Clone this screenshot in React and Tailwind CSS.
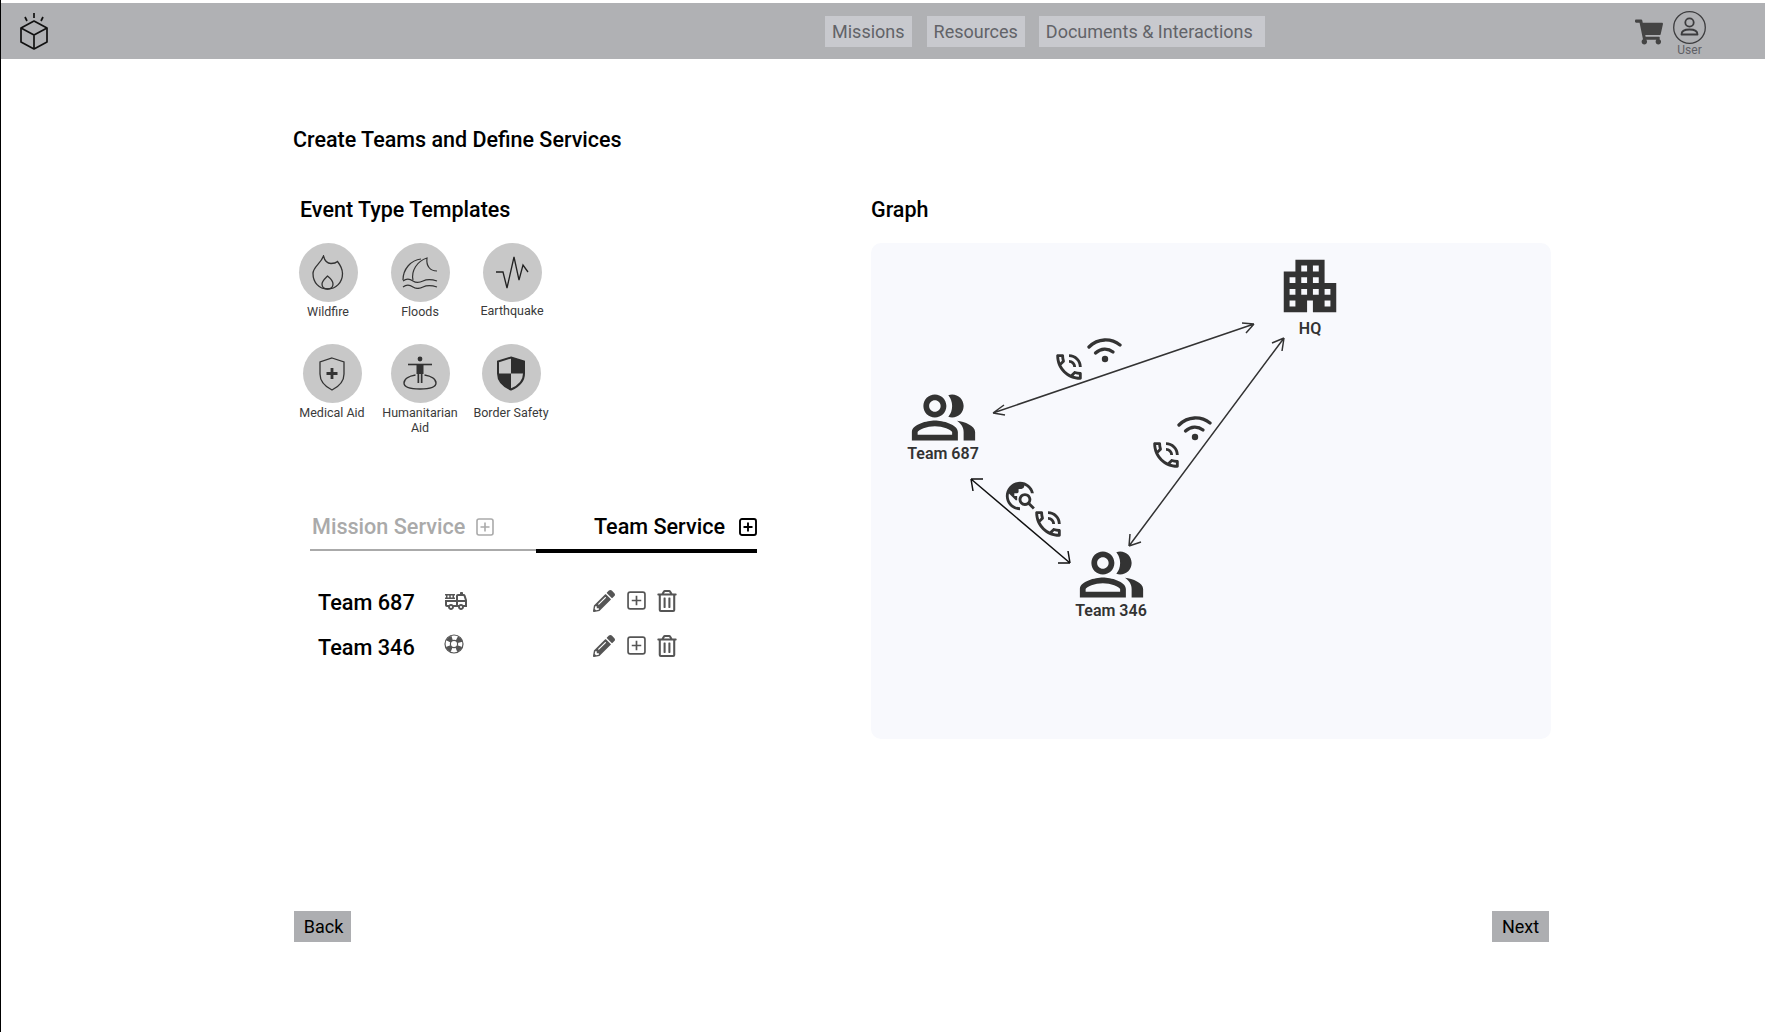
import { FaShoppingCart, FaPencilAlt, FaRegTrashAlt } from 'react-icons/fa';
import { MdApartment, MdOutlinePeopleAlt, MdOutlinePhoneInTalk, MdTravelExplore, MdOutlineFireTruck } from 'react-icons/md';

const font = { fontFamily: 'Roboto, sans-serif' };

const Logo = () => (
  <svg width="30" height="38" viewBox="0 0 30 38" fill="none" stroke="#111" strokeWidth="1.7" strokeLinejoin="round">
    <path d="M15 8 L28 15 L28 29 L15 36 L2 29 L2 15 Z" />
    <path d="M2 15 L15 22 L28 15 M15 22 V36" />
    <path d="M15 0 V5 M6 4 L8 8 M24 4 L22 8" />
  </svg>
);

const UserIcon = () => (
  <svg width="33" height="33" viewBox="0 0 33 33" fill="none" stroke="#3c3c3e" strokeWidth="1.3">
    <circle cx="16.5" cy="16.5" r="15.8" />
    <circle cx="16.5" cy="11.5" r="4.2" strokeWidth="1.8" />
    <path d="M8.5 23.5 C8.5 19.5 12 18.5 16.5 18.5 S24.5 19.5 24.5 23.5 Z" strokeWidth="1.8" strokeLinejoin="round" />
  </svg>
);

const Wildfire = () => (
  <svg width="32" height="35" viewBox="0 0 32 35" fill="none" stroke="#333" strokeWidth="1.3">
    <path d="M11.5 1 C12.5 5 15 8.5 19 8.5 C22 8.5 25 7 25.5 6.5 C29 11 30.5 15 30.5 18.5 C30.5 27.5 24 34 15.5 34 C7 34 1 27.5 1 18.5 C1 12 8.5 9 11.5 1 Z" />
    <path d="M15.5 21 C18 23 21 26 21 29 C21 32 19 34 15.5 34 C12 34 10 32 10 29 C10 26 13 23.5 15.5 21 Z" />
  </svg>
);

const Floods = () => (
  <svg width="36" height="32" viewBox="0 0 36 32" fill="none" stroke="#333" strokeWidth="1.2">
    <path d="M1 23 C1 12 9 3 19 2" />
    <path d="M11 23 C9 14 15 4 25 1 C24 9 28 14 35 14" />
    <path d="M1 24 C5 21 8 22 11 24 S17 26 21 24 S29 22 35 24" />
    <path d="M1 30 C5 27 8 28 11 30 S17 32 21 30 S29 28 35 30" />
  </svg>
);

const Earthquake = () => (
  <svg width="34" height="33" viewBox="0 0 34 33" fill="none" stroke="#222" strokeWidth="1.3">
    <path d="M1 16 H8 L12 32 L19 1 L24 24 L28 9 L33 16" />
  </svg>
);

const Medical = () => (
  <svg width="28" height="34" viewBox="0 0 28 34" fill="none" stroke="#333" strokeWidth="1.3">
    <path d="M14 1 L26 5 V17 C26 25 20 30 14 33 C8 30 2 25 2 17 V5 Z" />
    <path d="M14 11 V22 M8.5 16.5 H19.5" strokeWidth="2.8" />
  </svg>
);

const Humanitarian = () => (
  <svg width="34" height="35" viewBox="0 0 34 35" fill="none" stroke="#333">
    <circle cx="17" cy="3" r="2.4" fill="#333" stroke="none" />
    <path d="M5 8.5 H29" strokeWidth="1.6" />
    <path d="M13.5 8 H20.5 V18 H19.5 V27 H17.8 V18 H16.2 V27 H14.5 V18 H13.5 Z" fill="#333" stroke="none" />
    <path d="M12.5 19 C6 20 1 23 1 27 C1 31 8 33 17 33 S33 31 33 27 C33 23 28 20 21.5 19" strokeWidth="1.4" />
  </svg>
);

const Border = () => (
  <svg width="28" height="35" viewBox="0 0 28 35">
    <path d="M14 1.5 L27 5.5 V17.5 C27 25.5 21 30.5 14 33.5 C7 30.5 1 25.5 1 17.5 V5.5 Z" fill="none" stroke="#2e2e2e" strokeWidth="2" />
    <path d="M14 1.5 L27 5.5 V17.5 H14 Z M14 17.5 V33.5 C7 30.5 1 25.5 1 17.5 Z" fill="#2e2e2e" />
  </svg>
);

const PlusBox = ({ size = 18, color = '#555', width = 1.6 }) => (
  <svg width={size} height={size} viewBox="0 0 18 18" fill="none" stroke={color} strokeWidth={width}>
    <rect x="1" y="1" width="16" height="16" rx="2" />
    <path d="M9 4.5 V13.5 M4.5 9 H13.5" />
  </svg>
);

const LifeRing = () => (
  <svg width="20" height="20" viewBox="0 0 20 20" fill="none" stroke="#555">
    <circle cx="10" cy="10" r="9" strokeWidth="1.2" />
    <circle cx="10" cy="10" r="3.6" strokeWidth="1.2" />
    <circle cx="10" cy="10" r="6.25" strokeWidth="5" strokeDasharray="5 4.82" transform="rotate(20.5 10 10)" />
  </svg>
);

const Wifi = () => (
  <svg width="35" height="26" viewBox="0 0 35 26" fill="none" stroke="#333" strokeWidth="3.3" strokeLinecap="round">
    <path d="M2 9 C11 0 24 0 33 7" />
    <path d="M8.5 15 C14 10 21 10 26 14" />
    <circle cx="18" cy="21" r="3.2" fill="#333" stroke="none" />
  </svg>
);

const templatesTop = [
  { name: 'Wildfire', icon: Wildfire, w: 'w-[92px]' },
  { name: 'Floods', icon: Floods, w: 'w-[92px]' },
  { name: 'Earthquake', icon: Earthquake, w: 'w-[92px]', label: 'mt-[1px]' },
];

const templatesBottom = [
  { name: 'Medical Aid', icon: Medical, w: 'w-[88px]' },
  { name: 'Humanitarian Aid', icon: Humanitarian, w: 'w-[88px]' },
  { name: 'Border Safety', icon: Border, w: 'w-[94px]' },
];

const Template = ({ name, icon: Icon, w, label = 'mt-[2px]' }) => (
  <div className={`${w} flex flex-col items-center`}>
    <div className="w-[59px] h-[59px] rounded-full bg-[#c8c8c8] flex items-center justify-center">
      <Icon />
    </div>
    <p className={`${label} text-[12.5px] leading-[15px] text-[#3a3a3a] text-center`}>{name}</p>
  </div>
);

const TeamRow = ({ name, icon }) => (
  <div className="flex items-center h-[45px]">
    <span className="w-[126px] text-[21.7px] font-medium text-black">{name}</span>
    <span className="w-[149px] -mt-[6px] flex items-center text-[#555]">{icon}</span>
    <div className="-mt-[6px] flex items-center text-[#555]">
      <FaPencilAlt size={22} />
      <span className="ml-[12px]"><PlusBox size={19} /></span>
      <span className="ml-[10px]"><FaRegTrashAlt size={22} /></span>
    </div>
  </div>
);

const Node = ({ label, x, y }) => (
  <div className="absolute flex flex-col items-center w-[100px]" style={{ left: x, top: y }}>
    <MdOutlinePeopleAlt size={69} className="text-[#333] -my-[3px]" />
    <span className="text-[16px] leading-[18px] -mt-[4px] font-semibold text-[#333]">{label}</span>
  </div>
);

const Phone = ({ x, y }) => (
  <div className="absolute" style={{ left: x, top: y }}>
    <MdOutlinePhoneInTalk size={34} className="text-[#333]" />
  </div>
);

const Graph = () => (
  <div className="relative flex-1 h-[496px] mt-[20px] bg-[#f8f9fd] rounded-[10px]">
    <svg className="absolute inset-0" width="680" height="496" fill="none" stroke="#333" strokeWidth="1.5">
      <path d="M122 170 L383 81 M122 170 L133 162 M122 170 L134 172 M383 81 L371 80 M383 81 L375 90" />
      <path d="M413 95 L258 303 M413 95 L401 100 M413 95 L411 108 M258 303 L270 299 M258 303 L259 291" />
      <path stroke="#111" d="M100 236 L199 320 M100 236 L102 248 M100 236 L112 236 M199 320 L197 308 M199 320 L187 320" />
    </svg>
    <div className="absolute left-[404px] top-[8px] w-[70px] flex flex-col items-center">
      <MdApartment size={70} className="text-[#333]" />
      <span className="text-[16px] leading-[18px] -mt-[1px] font-semibold text-[#333]">HQ</span>
    </div>
    <Node label="Team 687" x={22} y={143} />
    <Node label="Team 346" x={190} y={300} />
    <div className="absolute left-[216px] top-[95px]"><Wifi /></div>
    <Phone x={181} y={107} />
    <div className="absolute left-[306px] top-[173px]"><Wifi /></div>
    <Phone x={278} y={195} />
    <div className="absolute left-[132px] top-[236px]"><MdTravelExplore size={34} className="text-[#333]" /></div>
    <Phone x={160} y={264} />
  </div>
);

export default function App() {
  return (
    <div className="min-h-[1032px] bg-white border-l border-black" style={font}>
      <div className="pt-[3px]">
        <header className="relative h-[56px] bg-[#b0b1b4] flex items-center">
          <div className="absolute left-[18px] top-[10px]"><Logo /></div>
          <nav className="flex items-center ml-[824px] text-[18px] text-[#626368]">
            <a className="h-[31px] px-[7px] flex items-center bg-[#c8c9ce]">Missions</a>
            <a className="h-[31px] ml-[15px] px-[7px] flex items-center bg-[#c8c9ce]">Resources</a>
            <a className="h-[31px] ml-[14px] pl-[7px] pr-[12px] flex items-center bg-[#c8c9ce]">Documents &amp; Interactions</a>
          </nav>
          <div className="absolute left-[1634px] top-[8px] flex items-start gap-[10px]">
            <FaShoppingCart size={28} className="text-[#444] mt-[7px]" />
            <div className="flex flex-col items-center">
              <UserIcon />
              <span className="text-[12px] leading-[12px] text-[#5f6066]">User</span>
            </div>
          </div>
        </header>
      </div>

      <main className="pl-[292px] pr-[214px]">
        <h1 className="mt-[67px] text-[21.5px] leading-[27px] font-medium text-black">Create Teams and Define Services</h1>

        <div className="mt-[44px] flex">
          <section className="w-[578px]">
            <h2 className="ml-[7px] text-[21.5px] leading-[26px] font-medium text-black">Event Type Templates</h2>
            <div className="mt-[20px] ml-[-11px] flex">
              {templatesTop.map((t) => <Template key={t.name} {...t} />)}
            </div>
            <div className="mt-[25px] ml-[-5px] flex">
              {templatesBottom.map((t) => <Template key={t.name} {...t} />)}
            </div>

            <div className="mt-[65px] ml-[17px] w-[447px] flex">
              <div className="w-[226px] h-[51px] flex items-start gap-[11px] pl-[2px] pt-[13px] border-b-2 border-[#aaa] text-[#aaa]">
                <span className="text-[21.6px] leading-[27px] font-medium">Mission Service</span>
                <span className="mt-[5px]"><PlusBox size={18} color="#aaa" /></span>
              </div>
              <div className="flex-1 h-[53px] flex items-start justify-end gap-[14px] pt-[13px] border-b-4 border-black text-black">
                <span className="text-[21.6px] leading-[27px] font-medium">Team Service</span>
                <span className="mt-[5px]"><PlusBox size={18} color="#000" width={1.9} /></span>
              </div>
            </div>

            <div className="mt-[28px] ml-[25px]">
              <TeamRow name="Team 687" icon={<MdOutlineFireTruck size={24} />} />
              <TeamRow name="Team 346" icon={<span className="-mt-[4px]"><LifeRing /></span>} />
            </div>
          </section>

          <section className="flex-1">
            <h2 className="text-[21.5px] leading-[26px] font-medium text-black">Graph</h2>
            <Graph />
          </section>
        </div>

        <div className="mt-[172px] flex justify-between pr-[2px] ml-[1px]">
          <button className="w-[57px] h-[31px] pl-[2px] bg-[#adaeb1] text-[18px] text-black">Back</button>
          <button className="w-[57px] h-[31px] bg-[#adaeb1] text-[18px] text-black">Next</button>
        </div>
      </main>
    </div>
  );
}
